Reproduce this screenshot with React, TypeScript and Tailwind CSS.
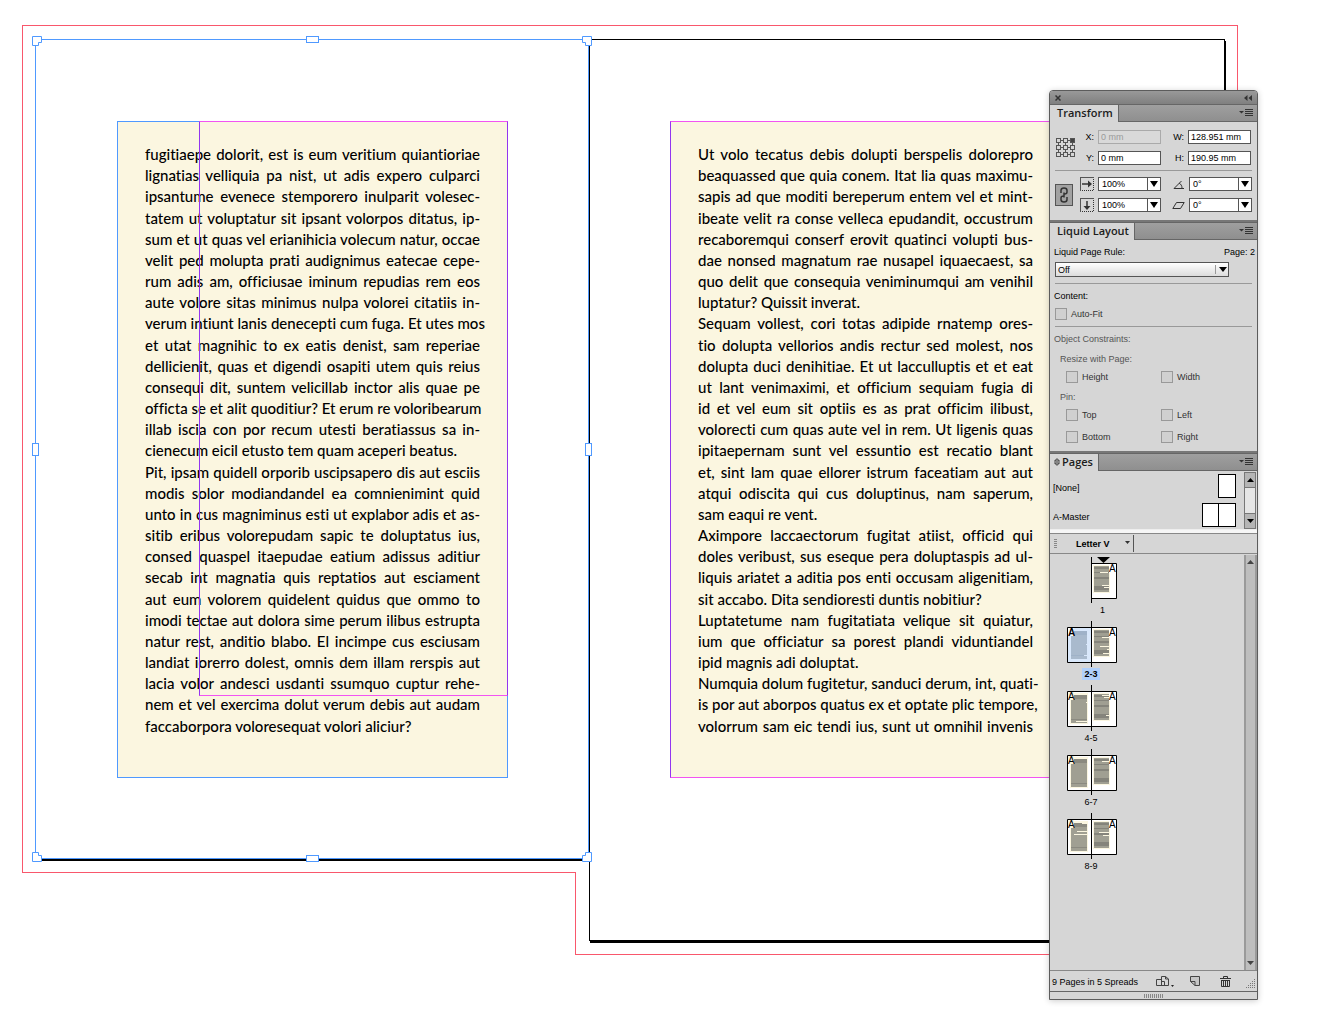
import React from "react";

type Line = [text: string, last?: boolean];

const leftText: Line[] = [
  ["fugitiaepe dolorit, est is eum veritium quiantioriae"],
  ["lignatias velliquia pa nist, ut adis expero culparci"],
  ["ipsantume evenece stemporero inulparit volesec-"],
  ["tatem ut voluptatur sit ipsant volorpos ditatus, ip-"],
  ["sum et ut quas vel erianihicia volecum natur, occae"],
  ["velit ped molupta prati audignimus eatecae cepe-"],
  ["rum adis am, officiusae iminum repudias rem eos"],
  ["aute volore sitas minimus nulpa volorei citatiis in-"],
  ["verum intiunt lanis denecepti cum fuga. Et utes mos"],
  ["et utat magnihic to ex eatis denist, sam reperiae"],
  ["dellicienit, quas et digendi osapiti utem quis reius"],
  ["consequi dit, suntem velicillab inctor alis quae pe"],
  ["officta se et alit quoditiur? Et erum re voloribearum"],
  ["illab iscia con por recum utesti beratiassus sa in-"],
  ["cienecum eicil etusto tem quam aceperi beatus.", true],
  ["Pit, ipsam quidell orporib uscipsapero dis aut esciis"],
  ["modis solor modiandandel ea comnienimint quid"],
  ["unto in cus magniminus esti ut explabor adis et as-"],
  ["sitib eribus volorepudam sapic te doluptatus ius,"],
  ["consed quaspel itaepudae eatium adissus aditiur"],
  ["secab int magnatia quis reptatios aut esciament"],
  ["aut eum volorem quidelent quidus que ommo to"],
  ["imodi tectae aut dolora sime perum ilibus estrupta"],
  ["natur rest, anditio blabo. El incimpe cus esciusam"],
  ["landiat iorerro dolest, omnis dem illam rerspis aut"],
  ["lacia volor andesci usdanti ssumquo cuptur rehe-"],
  ["nem et vel exercima dolut verum debis aut audam"],
  ["faccaborpora voloresequat volori aliciur?", true],
];

const rightText: Line[] = [
  ["Ut volo tecatus debis dolupti berspelis dolorepro"],
  ["beaquassed que quia conem. Itat lia quas maximu-"],
  ["sapis ad que moditi bereperum entem vel et mint-"],
  ["ibeate velit ra conse velleca epudandit, occustrum"],
  ["recaboremqui conserf erovit quatinci volupti bus-"],
  ["dae nonsed magnatum rae nusapel iquaecaest, sa"],
  ["quo delit que consequia veniminumqui am venihil"],
  ["luptatur? Quissit inverat.", true],
  ["Sequam vollest, cori totas adipide rnatemp ores-"],
  ["tio dolupta vellorios andis rectur sed molest, nos"],
  ["dolupta duci denihitiae. Et ut lacculluptis et et eat"],
  ["ut lant venimaximi, et officium sequiam fugia di"],
  ["id et vel eum sit optiis es as prat officim ilibust,"],
  ["volorecti cum quas aute vel in rem. Ut ligenis quas"],
  ["ipitaepernam sunt vel essuntio est recatio blant"],
  ["et, sint lam quae ellorer istrum faceatiam aut aut"],
  ["atqui odiscita qui cus doluptinus, nam saperum,"],
  ["sam eaqui re vent.", true],
  ["Aximpore laccaectorum fugitat atiist, officid qui"],
  ["doles veribust, sus eseque pera doluptaspis ad ul-"],
  ["liquis ariatet a aditia pos enti occusam aligenitiam,"],
  ["sit accabo. Dita sendioresti duntis nobitiur?", true],
  ["Luptatetume nam fugitatiata velique sit quiatur,"],
  ["ium que officiatur sa porest plandi viduntiandel"],
  ["ipid magnis adi doluptat.", true],
  ["Numquia dolum fugitetur, sanduci derum, int, quati-"],
  ["is por aut aborpos quatus ex et optate plic tempore,"],
  ["volorrum sam eic tendi ius, sunt ut omnihil invenis"],
];

function Story({ lines }: { lines: Line[] }) {
  return (
    <div className="flex h-[593px] flex-col justify-between font-['Lato',sans-serif] text-[15px] leading-[21px] font-medium text-black [font-variant-ligatures:none]">
      {lines.map(([text, last]) => (
        <p
          key={text}
          className={last ? "whitespace-nowrap" : "whitespace-nowrap [text-align-last:justify]"}
        >
          {text}
        </p>
      ))}
    </div>
  );
}

function Corner({ className }: { className: string }) {
  return (
    <svg viewBox="0 0 10 10" className={`absolute size-[10px] ${className}`} aria-hidden="true">
      <path d="M.5.5h9v6h-3v3h-6z" fill="#fff" stroke="#4f99ff" />
    </svg>
  );
}

function Canvas() {
  return (
    <section aria-label="Pasteboard">
      {/* bleed guides */}
      <div className="absolute top-[25px] left-[22px] flex items-start">
        <div className="h-[848px] w-[553px] border-y border-l border-[#f9576c]" />
        <div className="relative h-[930px] w-[663px] border-y border-r border-[#f9576c]">
          <div className="absolute bottom-0 left-0 h-[82px] w-px bg-[#f9576c]" />
        </div>
      </div>

      {/* right page */}
      <div className="absolute top-[39px] left-[589px] h-[902px] w-[636px] border border-black bg-white shadow-[1px_2px_0_#000]" />
      <div className="absolute top-[121px] left-[670px] w-[391px] border border-[#f254f2] border-l-[#9335f0] bg-[#fbf6e0] px-[27px] pt-[22px] pb-10">
        <Story lines={rightText} />
      </div>

      {/* left page with its selection frame */}
      <div className="absolute top-[39px] left-[35px] h-[820px] w-[554px] border border-[#4f99ff] bg-white shadow-[0_2px_0_#000]">
        <Corner className="-top-1 -left-1" />
        <Corner className="-top-1 -right-1 -scale-x-100" />
        <Corner className="-bottom-1 -left-1 -scale-y-100" />
        <Corner className="-right-1 -bottom-1 rotate-180" />
        <i className="absolute -top-1 left-[270px] h-[7px] w-[13px] border border-[#4f99ff] bg-white" />
        <i className="absolute -bottom-1 left-[270px] h-[7px] w-[13px] border border-[#4f99ff] bg-white" />
        <i className="absolute top-[403px] -left-1 h-[13px] w-[7px] border border-[#4f99ff] bg-white" />
        <i className="absolute top-[403px] -right-1 h-[13px] w-[7px] border border-[#4f99ff] bg-white" />
      </div>
      <div className="absolute top-[121px] left-[117px] w-[391px] border border-[#4f99ff] bg-[#fbf6e0] px-[27px] pt-[22px] pb-10">
        <Story lines={leftText} />
        {/* margin guides of the smaller layout */}
        <div className="absolute -top-px -right-px h-[575px] w-[309px] border border-[#f254f2] border-x-[#9335f0]" />
      </div>
    </section>
  );
}

function MenuIcon() {
  return (
    <button type="button" aria-label="Panel menu" className="mr-1 self-center">
      <svg viewBox="0 0 14 8" className="block h-2 w-3.5" aria-hidden="true">
        <path d="M0 2h5L2.500 4.500z" fill="#333" />
        <path d="M6 .5h8M6 2.500h8M6 4.500h8M6 6.500h8" stroke="#333" />
      </svg>
    </button>
  );
}

function TabBar({ title, icon }: { title: string; icon?: React.ReactNode }) {
  return (
    <div className="flex h-[18px] justify-between border-t border-[#666] bg-linear-to-b from-[#9f9f9f] to-[#8e8e8e]">
      <h2 className="flex items-start gap-1 border-r border-[#666] bg-[#d6d6d6] pr-[5px] font-['Open_Sans',sans-serif] text-[11px] leading-[15px] font-semibold text-[#1c1c1c]">
        {icon ?? <span className="w-[3px]" />}
        {title}
      </h2>
      <div className="flex flex-1 justify-end border-b border-[#666]">
        <MenuIcon />
      </div>
    </div>
  );
}

function Field({ id, label, value, disabled }: { id: string; label: string; value: string; disabled?: boolean }) {
  return (
    <>
      <label htmlFor={id} className="text-right">
        {label}
      </label>
      <input
        id={id}
        defaultValue={value}
        disabled={disabled}
        className="h-[14px] w-full border border-[#555] bg-white px-0.5 disabled:border-[#aaa] disabled:bg-[#d9d9d9] disabled:text-[#999]"
      />
    </>
  );
}

function Combo({ label, value }: { label: string; value: string }) {
  return (
    <div className="flex h-[14px] w-[63px] border border-[#555] bg-white">
      <input aria-label={label} defaultValue={value} className="w-0 flex-1 bg-transparent pl-[3px]" />
      <button type="button" aria-label={`${label} presets`} className="flex w-[13px] items-center justify-center border-l border-[#555]">
        <svg viewBox="0 0 8 6" className="h-1.5 w-2" aria-hidden="true">
          <path d="M0 0h8L4 6z" />
        </svg>
      </button>
    </div>
  );
}

function ReferencePoint() {
  const at = [0.5, 7.5, 14.5];
  return (
    <svg viewBox="0 0 19 19" className="ml-px size-[19px] shrink-0" fill="none" stroke="#555" aria-label="Reference point">
      <path d="M5 2.500h2M12 2.500h2M5 16.500h2M12 16.500h2M2.500 5v2M2.500 12v2M9.500 5v2M9.500 12v2M16.500 5v2M16.500 12v2M5 9.500h2M12 9.500h2" />
      {at.map((y) =>
        at.map((x) => (
          <rect key={`${x}-${y}`} x={x} y={y} width="4" height="4" fill={x > 14 && y < 1 ? "#444" : "#d6d6d6"} />
        )),
      )}
    </svg>
  );
}

function ScaleIcon({ down }: { down?: boolean }) {
  return (
    <svg viewBox="0 0 14 14" className="size-3.5" fill="none" stroke="#333" aria-hidden="true">
      {down ? (
        <>
          <path d="M.5 0v14M0 .5h14" stroke="#555" />
          <path d="M13.500 2v12M2 13.500h12" strokeDasharray="1 1" />
          <path d="M7 3v6" strokeWidth="1.500" />
          <path d="M3.500 8h7L7 12z" fill="#333" stroke="none" />
        </>
      ) : (
        <>
          <path d="M.5 0v14M0 .5h14" stroke="#555" />
          <path d="M13.500 2v12M2 13.500h12" strokeDasharray="1 1" />
          <path d="M2 7h7" strokeWidth="1.500" />
          <path d="M8 3.500v7L12 7z" fill="#333" stroke="none" />
        </>
      )}
    </svg>
  );
}

function TransformPanel() {
  return (
    <section aria-label="Transform">
      <TabBar title="Transform" />
      <div className="px-[5px] pt-2 pb-2">
        <div className="flex items-center">
          <ReferencePoint />
          <div className="ml-[5px] grid flex-1 grid-cols-[14px_63px_19px_63px] items-center gap-x-1 gap-y-[7px]">
            <Field id="x" label="X:" value="0 mm" disabled />
            <Field id="w" label="W:" value="128.951 mm" />
            <Field id="y" label="Y:" value="0 mm" />
            <Field id="h" label="H:" value="190.95 mm" />
          </div>
        </div>
        <hr className="mt-[5px] mb-1.5 border-[#999]" />
        <div className="flex items-center">
          <button type="button" aria-label="Constrain proportions" className="flex h-[22px] w-[18px] items-center justify-center border border-[#555] bg-[#a2a2a2]">
            <svg viewBox="0 0 10 16" className="h-4 w-2.5" fill="none" stroke="#333" strokeWidth="1.500" aria-hidden="true">
              <path d="M2 6V3.500C2 2 3 1 5 1s3 1 3 2.500V5C8 6.500 7 7 5.500 7M8 10v2.500C8 14 7 15 5 15s-3-1-3-2.500V11C2 9.500 3 9 4.500 9M5 5.500v5" />
            </svg>
          </button>
          <div className="ml-[7px] grid flex-1 grid-cols-[14px_63px_20px_63px] items-center gap-x-1 gap-y-[7px]">
            <ScaleIcon />
            <Combo label="Scale X percentage" value="100%" />
            <svg viewBox="0 0 12 9" className="h-[9px] w-3 justify-self-end" fill="none" stroke="#333" aria-hidden="true">
              <path d="M11 8.500H1L8.500 1M6 3c2 1 3 3 3 5" />
            </svg>
            <Combo label="Rotation angle" value="0°" />
            <ScaleIcon down />
            <Combo label="Scale Y percentage" value="100%" />
            <svg viewBox="0 0 13 7" className="h-[7px] w-[13px] justify-self-end" fill="none" stroke="#333" aria-hidden="true">
              <path d="M.8 6.500 4.500.5h7.700L8.500 6.500z" />
            </svg>
            <Combo label="Shear angle" value="0°" />
          </div>
        </div>
      </div>
    </section>
  );
}

function Check({ label }: { label: string }) {
  return (
    <label className="flex h-3 items-center gap-1">
      <input type="checkbox" className="size-3 appearance-none border border-[#999] bg-[#d0d0d0]" />
      {label}
    </label>
  );
}

function LiquidPanel() {
  return (
    <section aria-label="Liquid Layout" className="border-t-2 border-[#777]">
      <TabBar title="Liquid Layout" />
      <div className="px-[5px] pt-[7px] pb-2">
        <div className="-mx-px flex h-2.5 items-center justify-between">
          <label htmlFor="rule">Liquid Page Rule:</label>
          <span className="-mr-0.5">Page: 2</span>
        </div>
        <div className="relative mt-[5px] w-[174px]">
          <select id="rule" className="block h-[15px] w-full appearance-none border border-[#555] bg-linear-to-b from-white to-[#dcdcdc] pl-0.5">
            <option>Off</option>
          </select>
          <svg viewBox="0 0 12 9" className="pointer-events-none absolute top-[3px] right-0.5 h-[9px] w-3" aria-hidden="true">
            <path d="M.5 0v9" stroke="#999" />
            <path d="M4 2h8L8 7z" />
          </svg>
        </div>
        <hr className="mt-1.5 mb-[7px] border-[#999]" />
        <p className="-ml-px h-2.5">Content:</p>
        <div className="mt-[7px] text-[#333]">
          <Check label="Auto-Fit" />
        </div>
        <hr className="mt-1.5 mb-[7px] border-[#999]" />
        <div className="text-[#555]">
          <p className="-ml-px h-3">Object Constraints:</p>
          <p className="mt-2 ml-[5px] h-3">Resize with Page:</p>
          <div className="mt-[5px] ml-[11px] grid grid-cols-[95px_1fr] text-[#333]">
            <Check label="Height" />
            <Check label="Width" />
          </div>
          <p className="mt-[9px] ml-[5px] h-3">Pin:</p>
          <div className="mt-[5px] ml-[11px] grid grid-cols-[95px_1fr] gap-y-2.5 text-[#333]">
            <Check label="Top" />
            <Check label="Left" />
            <Check label="Bottom" />
            <Check label="Right" />
          </div>
        </div>
      </div>
    </section>
  );
}

interface Spread {
  label: string;
  left?: number[][];
  right: number[][];
  selected?: boolean;
}

/* Each mark is [y, x, width] of a gap left by a short last line. */
const spreads: Spread[] = [
  { label: "1", right: [[9, 9, 8], [22, 11, 7], [24, 13, 5]] },
  { label: "2-3", selected: true, left: [[17, 19, 1], [28, 17, 3]], right: [[10, 11, 7], [19, 9, 9], [22, 16, 2], [26, 12, 6]] },
  { label: "4-5", left: [[11, 19, 1], [30, 9, 11]], right: [[4, 11, 7], [6, 13, 5], [24, 15, 3]] },
  { label: "6-7", left: [], right: [[6, 11, 7]] },
  { label: "8-9", left: [[4, 15, 5], [12, 10, 10], [15, 7, 13]], right: [[13, 8, 10], [16, 12, 6]] },
];

function Thumb({ spread }: { spread: Spread }) {
  const { left, right, selected, label } = spread;
  return (
    <svg viewBox="0 0 50 46" className="block h-[46px] w-[50px]" fontSize="10" fontFamily="Liberation Sans, sans-serif" aria-hidden="true">
      {left && (
        <>
          <path d="M.5 6.500h24v35H.5z" fill={selected ? "#d9e8fb" : "#fff"} />
          {!selected && <path d="M3 8h18v31H3z" fill="#fbf6e0" />}
          <path d="M4 10h16v28H4z" fill={selected ? "#a9bacd" : "#a09f92"} />
          <path d="M4 10h16v4H4zM4 34h16v1H4z" fill={selected ? "#9fb2c8" : "#8b8a80"} />
          {left.map(([y, x, w]) => (
            <path key={`${y}-${x}`} d={`M${x} ${y + 6}h${w}v1h-${w}z`} fill={selected ? "#d9e8fb" : "#fbf6e0"} />
          ))}
          <path d="M1 7h6v8H1z" fill={selected ? "#fff" : "#fbf6e0"} />
          <text x="1" y="15" fontWeight={selected ? 700 : 400}>A</text>
          <path d="M.5 6.500h24v35H.5z" fill="none" stroke="#000" />
        </>
      )}
      <path d="M24.500 6.500h25v35h-25z" fill="#fff" />
      <path d="M26 8h17v28H26z" fill="#fbf6e0" />
      <path d="M27 9h15v26H27z" fill="#a09f92" />
      <path d="M27 10h15v2H27zM27 15h15v1H27zM27 20h15v2H27zM27 29h15v4H27z" fill="#85847b" />
      {right.map(([y, x, w]) => (
        <path key={`${y}-${x}`} d={`M${x + 24} ${y + 6}h${w}v1h-${w}z`} fill="#fbf6e0" />
      ))}
      <path d="M42 8h6v8h-6z" fill="#fff" />
      <text x="42" y="15">A</text>
      <path d="M24.500 6.500h25v35h-25z" fill="none" stroke="#000" />
      <path d="M24.500 0v46" stroke="#000" />
      {label === "1" && <path d="M30 0h13l-6.500 6z" />}
    </svg>
  );
}

function ScrollArrow({ up, label, raised }: { up?: boolean; label: string; raised?: boolean }) {
  return (
    <button
      type="button"
      aria-label={label}
      className={`flex h-3.5 w-full shrink-0 items-center justify-center ${raised ? "bg-[#b5b5b5] outline outline-[#777]" : ""}`}
    >
      <svg viewBox="0 0 7 4" className={`h-1 w-[7px] ${up ? "" : "rotate-180"}`} fill={raised ? "#000" : "#444"} aria-hidden="true">
        <path d="M0 4h7L3.500 0z" />
      </svg>
    </button>
  );
}

function PagesPanel() {
  return (
    <section aria-label="Pages" className="border-t-2 border-[#777]">
      <TabBar
        title="Pages"
        icon={
          <svg viewBox="0 0 6 8" className="mt-1 -mr-0.5 ml-1 h-2 w-1.5 shrink-0" fill="none" stroke="#333" aria-hidden="true">
            <path d="M.5 3 3 .7 5.500 3zM.5 5 3 7.300 5.500 5z" />
          </svg>
        }
      />
      <div className="flex h-[58px]">
        <ul className="flex flex-1 flex-col gap-[5px] pt-[3px] pr-2 pl-[3px]">
          <li className="flex items-center justify-between">
            <span className="pt-[3px]">[None]</span>
            <span className="h-6 w-[18px] border border-black bg-white" />
          </li>
          <li className="flex items-center justify-between">
            <span className="pt-[3px]">A-Master</span>
            <span className="flex h-6 w-[34px] border border-black bg-white">
              <span className="w-4 border-r border-black" />
            </span>
          </li>
        </ul>
        <div className="mt-px mr-px flex w-3 flex-col justify-between border border-[#777] bg-[#e6e6e6]">
          <ScrollArrow up raised label="Scroll masters up" />
          <ScrollArrow raised label="Scroll masters down" />
        </div>
      </div>
      <div className="h-1 border-t border-[#eee] bg-[#f6f6f6]" />
      <div className="flex h-[21px] items-center border-y border-[#888]">
        <svg viewBox="0 0 3 10" className="ml-1 h-2.5 w-[3px]" aria-hidden="true">
          <path d="M0 .5h3M0 2.500h3M0 4.500h3M0 6.500h3M0 8.500h3" stroke="#888" />
        </svg>
        <button type="button" className="ml-[19px] flex h-[17px] items-center gap-[15px] border-r border-[#555] pr-[3px] font-bold">
          Letter V
          <svg viewBox="0 0 5 3" className="mb-0.5 h-[3px] w-[5px]" aria-hidden="true">
            <path d="M0 0h5L2.500 3z" fill="#333" />
          </svg>
        </button>
      </div>
      <div className="flex h-[416px] justify-between">
        <ul className="pt-[3px] pl-[17px]">
          {spreads.map((s) => (
            <li key={s.label} className="h-16">
              <button type="button" className={`flex w-[50px] flex-col ${s.left ? "items-center" : "items-end"}`}>
                <Thumb spread={s} />
                <span
                  className={
                    s.selected
                      ? "mr-0.5 mt-px bg-[#b0d0fb] px-0.5 leading-3 font-bold"
                      : s.left
                        ? "mr-0.5 mt-px leading-3"
                        : "mt-px mr-3 leading-3"
                  }
                >
                  {s.label}
                </span>
              </button>
            </li>
          ))}
        </ul>
        <div className="mt-px flex w-[13px] flex-col justify-between border-x-2 border-[#9a9a9a] bg-[#bebebe]">
          <ScrollArrow up label="Scroll pages up" />
          <ScrollArrow label="Scroll pages down" />
        </div>
      </div>
      <footer className="flex h-[22px] items-center border-y border-b-[#666] border-t-[#888] pl-0.5">
        <span className="pt-px">9 Pages in 5 Spreads</span>
        <div className="ml-[18px] flex flex-1 items-center text-[#444]">
          <button type="button" aria-label="Edit page size">
            <svg viewBox="0 0 18 12" className="h-3 w-[18px]" fill="none" stroke="#444" aria-hidden="true">
              <path d="M5 4.500H.5v6h7.500" />
              <path d="M5.500 1.500h4l3 2.500v6.500h-7zM9.500 1.500V4h3M5.500 6.500h3v4" />
              <path d="M15 10h3l-1.500 2z" fill="#222" stroke="none" />
            </svg>
          </button>
          <button type="button" aria-label="Create new page" className="ml-4">
            <svg viewBox="0 0 10 10" className="size-2.5" fill="#c6c6c6" stroke="#444" aria-hidden="true">
              <path d="M.5.5h9v9H5L.5 5.500zM.5 5.500H5v4" />
            </svg>
          </button>
          <button type="button" aria-label="Delete selected pages" className="ml-5">
            <svg viewBox="0 0 11 11" className="size-[11px]" fill="none" stroke="#333" aria-hidden="true">
              <path d="M0 2.500h11M3.500 2V.5h4V2M1.500 4.500h8M1.500 4v6.500h8V4M3.500 5v5M5.500 5v5M7.500 5v5" />
            </svg>
          </button>
          <svg viewBox="0 0 10 10" className="mt-1.5 mr-px ml-auto size-2.5" aria-hidden="true">
            <path d="M8 .5h1M6 2.500h3M4 4.500h5M2 6.500h7M0 8.500h9" stroke="#777" strokeDasharray="1 1" />
          </svg>
        </div>
      </footer>
      <div className="flex h-[7px] items-center justify-center">
        <svg viewBox="0 0 19 4" className="h-1 w-[19px]" aria-hidden="true">
          <path d="M0 2h19" stroke="#888" strokeWidth="4" strokeDasharray="1 1" />
        </svg>
      </div>
    </section>
  );
}

export default function App() {
  return (
    <main className="relative min-h-screen overflow-hidden bg-white">
      <Canvas />
      <aside className="absolute top-[90px] left-[1049px] w-[209px] overflow-hidden rounded-t border border-[#5c5c5c] bg-[#d6d6d6] font-['Liberation_Sans',Arial,sans-serif] text-[9px] leading-[10px] text-black shadow-[0_1px_6px_rgba(0,0,0,0.2)]">
        <header className="flex h-[13px] items-center justify-between bg-linear-to-b from-[#999] to-[#808080] px-[5px]">
          <button type="button" aria-label="Close">
            <svg viewBox="0 0 6 6" className="block size-1.5" stroke="#333" strokeWidth="1.500" aria-hidden="true">
              <path d="m.5.5 5 5m0-5-5 5" />
            </svg>
          </button>
          <button type="button" aria-label="Collapse to icons">
            <svg viewBox="0 0 8 6" className="block h-1.5 w-2" fill="#333" aria-hidden="true">
              <path d="M3.500 0v6L0 3zM8 0v6L4.500 3z" />
            </svg>
          </button>
        </header>
        <TransformPanel />
        <LiquidPanel />
        <PagesPanel />
      </aside>
    </main>
  );
}
